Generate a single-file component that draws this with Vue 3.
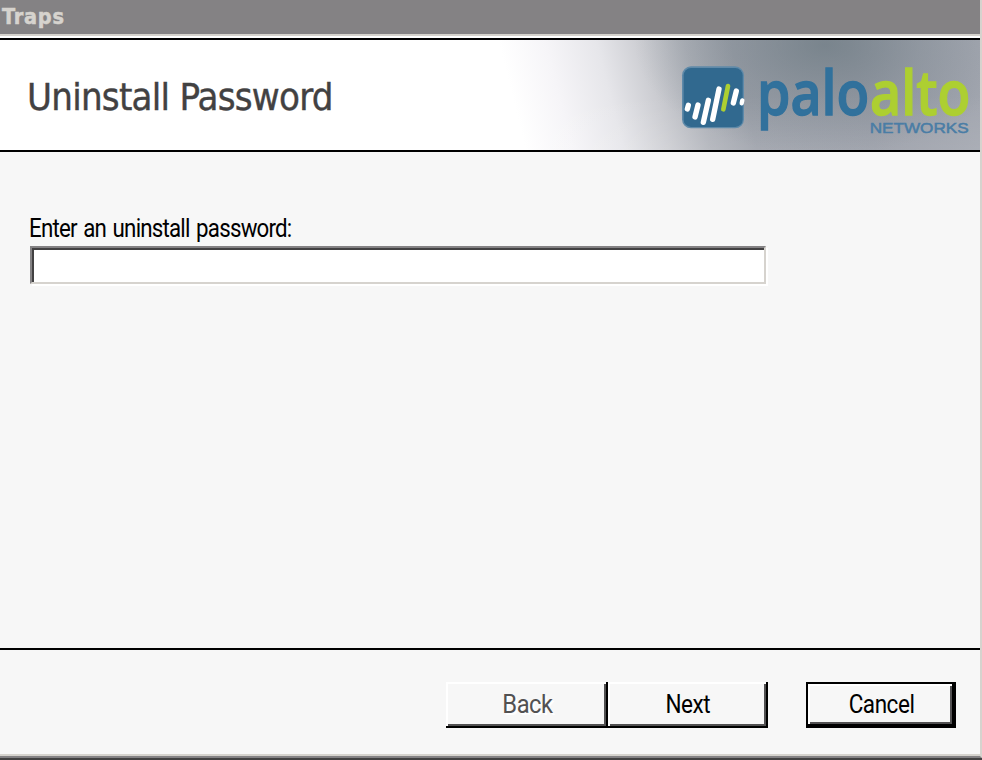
<script setup>
import { ref } from 'vue'
const password = ref('')
</script>

<template>
  <main class="window">
    <div class="content">
      <div class="titlebar"><span class="caption">Traps</span></div>
      <header class="banner">
        <h1>Uninstall Password</h1>
        <svg class="logo" viewBox="0 30 930 330" role="img" aria-label="paloalto networks">
          <rect x="36" y="109" width="186" height="186" rx="27" fill="#5f8aa9" />
          <rect x="41" y="114" width="177" height="177" rx="22" fill="#31698f" />
          <g stroke-width="16" stroke-linecap="round" fill="none" stroke="#fff">
            <path d="M52 237L55 226" />
            <path d="M75 261L84 225" />
            <path d="M100 277L115 211" />
            <path d="M128 268L147 177" />
            <path d="M160 238L174 168" stroke="#adcf31" stroke-width="14" />
            <path d="M190 219L199 183" />
            <path d="M215 220L217 211" stroke-width="13" />
          </g>
          <g class="wordmark">
            <text x="261" y="255" textLength="337" lengthAdjust="spacingAndGlyphs" fill="#31719c" stroke="#31719c">palo</text>
            <text x="600" y="255" textLength="301" lengthAdjust="spacingAndGlyphs" fill="#adcf31" stroke="#adcf31">alto</text>
          </g>
          <text class="networks" x="599" y="308" textLength="297" lengthAdjust="spacingAndGlyphs">NETWORKS</text>
        </svg>
      </header>
      <section class="form">
        <label for="password"><span class="label-text">Enter an uninstall password:</span></label>
        <input id="password" v-model="password" type="password" />
      </section>
      <footer class="actions">
        <button class="back" disabled><span>Back</span></button>
        <button class="next"><span>Next</span></button>
        <button class="cancel"><span>Cancel</span></button>
      </footer>
    </div>
  </main>
</template>

<style>
body { margin: 0; overflow: hidden; }
</style>

<style scoped>
* { box-sizing: border-box; }
.window {
  width: 982px;
  height: 760px;
  background: #f7f7f7;
  border-bottom: 2px solid #424142;
  font-family: Roboto, "Liberation Sans", sans-serif;
}
.content {
  height: 758px;
  display: flex;
  flex-direction: column;
  border-right: 2px solid #d6d3ce;
  border-bottom: 2px solid #848284;
  box-shadow: inset 0 -2px #d6d3ce;
}
.titlebar {
  height: 38px;
  flex: none;
  padding-left: 2px;
  background: linear-gradient(#848284 34px, #d6d3ce 34px 36px, #fff 36px);
  color: #d6d3ce;
  font: bold 21.5px/33px "DejaVu Sans Condensed", "DejaVu Sans", sans-serif;
}
.caption { display: inline-block; letter-spacing: .8px; -webkit-text-stroke: .5px #d6d3ce; }
.banner {
  height: 114px;
  flex: none;
  display: flex;
  justify-content: space-between;
  border-top: 2px solid #000;
  border-bottom: 2px solid #000;
  background:
    radial-gradient(ellipse 190px 110px at 825px 5px, rgba(108, 122, 130, .7), rgba(112, 126, 134, .3) 50%, rgba(112, 126, 134, 0)),
    linear-gradient(rgba(255, 255, 255, 0) 50%, rgba(255, 255, 255, .1)),
    linear-gradient(76deg, #fff 510px, #f6f5f8 555px, #e6e6ea 605px, #cbccd1 650px, #afb2b9 690px, #9ca0a9 735px, #989ca6 850px, #a4a8b1 985px);
}
h1 {
  margin: 0;
  padding-left: 27px;
  color: #424142;
  font: 38px/114px "DejaVu Sans Condensed", "DejaVu Sans", sans-serif;
  letter-spacing: -.75px;
  white-space: nowrap;
  -webkit-text-stroke: .4px #424142;
}
.logo { width: 310px; height: 110px; flex: none; }
.wordmark { font: 600 187px "Open Sans", sans-serif; stroke-width: 4px; }
.networks { font: 45px "Liberation Sans", sans-serif; fill: #4a7da5; stroke: #4a7da5; stroke-width: 1.5px; }
.form {
  flex: 1;
  padding: 62px 0 0 30px;
}
label {
  display: block;
  height: 32px;
  font-size: 25px;
  line-height: 29px;
  white-space: nowrap;
}
.label-text {
  display: inline-block;
  margin-left: -1px;
  letter-spacing: -.9px;
  word-spacing: 2px;
  transform: scaleX(.893);
  transform-origin: left;
}
input {
  display: block;
  width: 736px;
  height: 38px;
  padding: 0 6px;
  border: 2px solid;
  border-color: #848284 #d6d3ce #d6d3ce #848284;
  border-radius: 0;
  outline: none;
  background: #fff;
  box-shadow: inset 2px 2px #424142, 2px 2px #fff;
  font-size: 24px;
}
.actions {
  height: 108px;
  flex: none;
  display: flex;
  padding: 32px 0 0 446px;
  border-top: 2px solid #000;
}
button {
  height: 46px;
  padding: 0 0 1px;
  border: 0;
  border-radius: 0;
  background: #f7f7f7;
  color: #000;
  font: 25px/42px Roboto, "Liberation Sans", sans-serif;
  letter-spacing: -.5px;
  box-shadow: inset -2px -2px #000, inset 2px 2px #fff, inset -4px -4px #525152;
}
button span { display: inline-block; transform: scaleX(.9); }
.back { width: 162px; color: #525152; text-shadow: 2px 2px #fff; }
.back span { transform: scaleX(.95); }
.next { width: 160px; }
.cancel {
  width: 150px;
  margin-left: 38px;
  border: 2px solid #000;
  line-height: 38px;
}
.cancel span { margin-left: 2px; }
</style>
